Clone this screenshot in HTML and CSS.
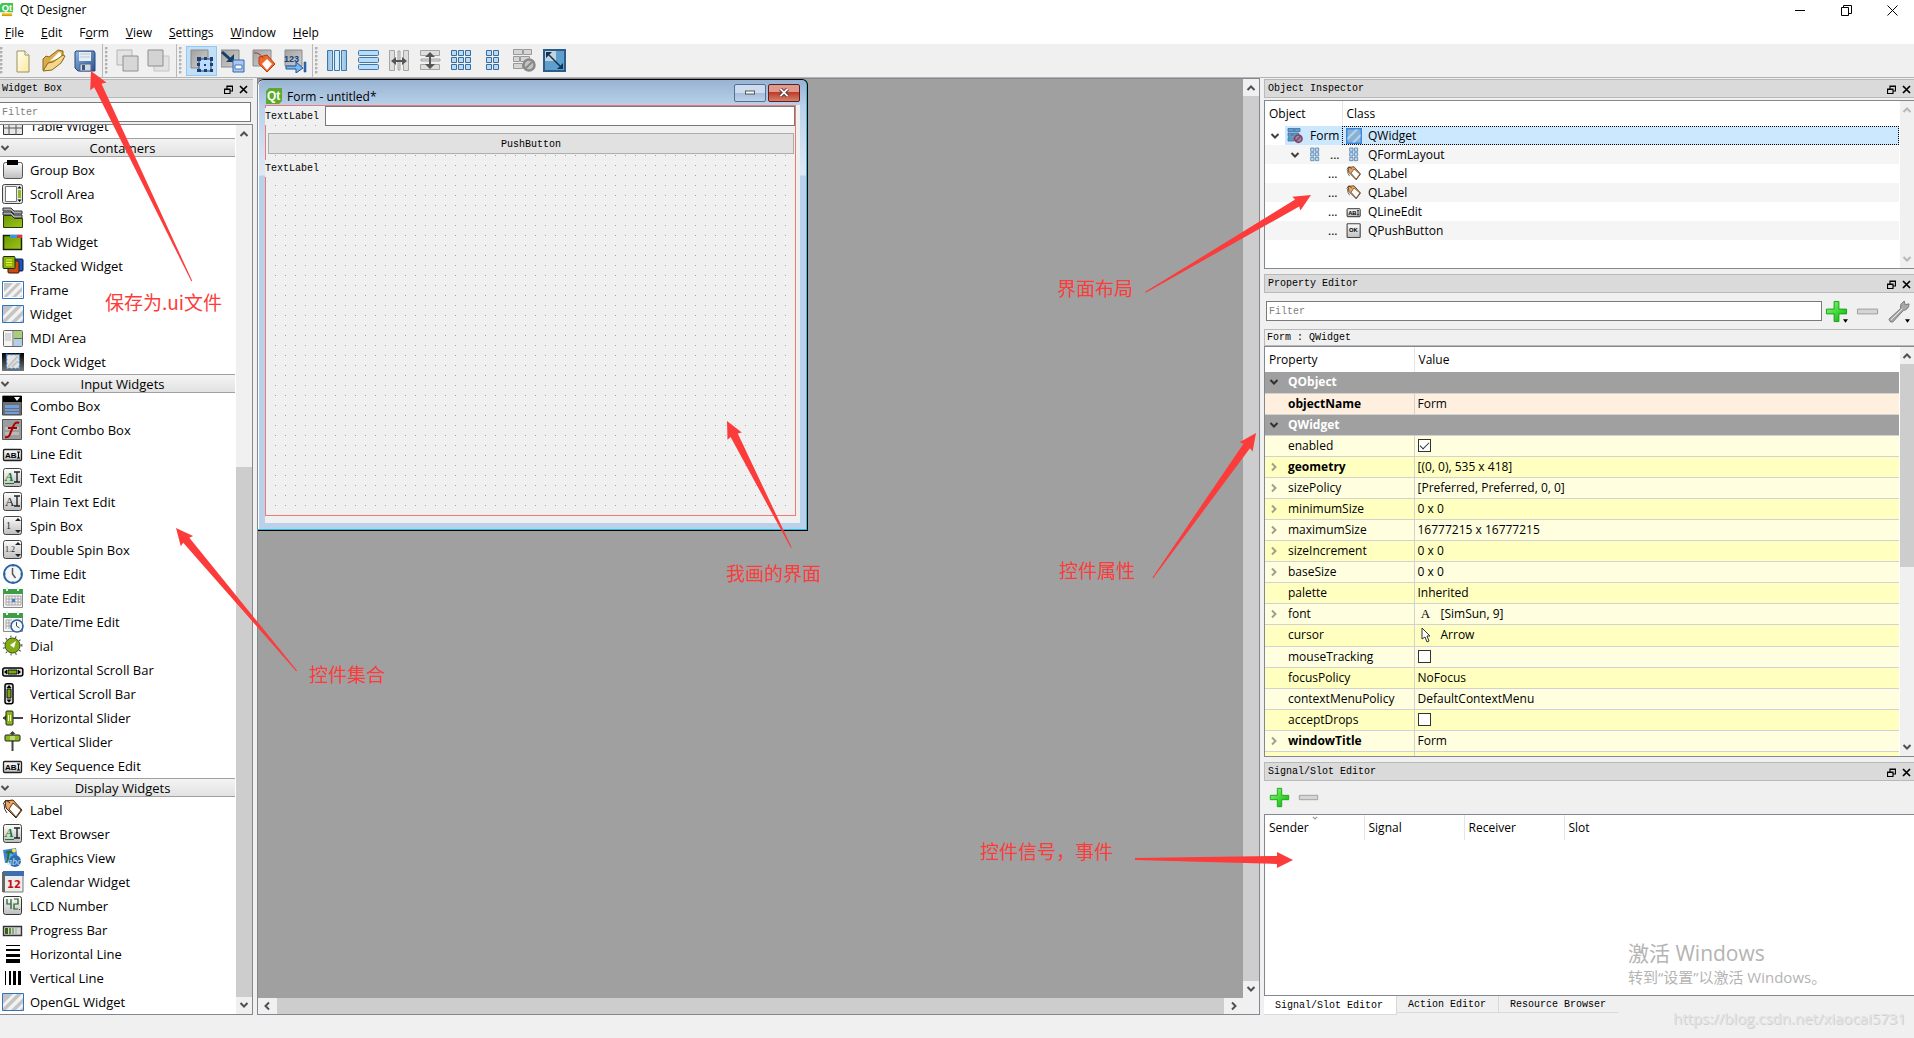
FILE: index.html
```html
<!DOCTYPE html>
<html lang="en">
<head>
<meta charset="utf-8">
<title>Qt Designer</title>
<link rel="stylesheet" href="styles.css">
</head>
<body>
<svg class="gradients" aria-hidden="true">
  <defs>
    <linearGradient id="g-grey" x1="0" y1="0" x2="0" y2="1"><stop offset="0" stop-color="#fdfdfd"/><stop offset="1" stop-color="#bdbdbd"/></linearGradient>
    <linearGradient id="g-dark" x1="0" y1="0" x2="1" y2="1"><stop offset="0" stop-color="#a2a2a2"/><stop offset="1" stop-color="#cfcfcf"/></linearGradient>
    <linearGradient id="g-green" x1="0" y1="0" x2="1" y2="1"><stop offset="0" stop-color="#6a9a00"/><stop offset="1" stop-color="#9ec41c"/></linearGradient>
    <linearGradient id="g-plus" x1="0" y1="0" x2="1" y2="1"><stop offset="0" stop-color="#8dfc7c"/><stop offset="1" stop-color="#00b400"/></linearGradient>
    <linearGradient id="g-blue" x1="0" y1="0" x2="1" y2="0"><stop offset="0" stop-color="#8fc0e8"/><stop offset=".5" stop-color="#d8f0ff"/><stop offset="1" stop-color="#8fc0e8"/></linearGradient>
    <linearGradient id="g-page" x1="0" y1="0" x2="1" y2="1"><stop offset="0" stop-color="#fffef0"/><stop offset="1" stop-color="#fbe9a0"/></linearGradient>
    <linearGradient id="g-disk" x1="0" y1="0" x2="1" y2="1"><stop offset="0" stop-color="#8fb6e4"/><stop offset="1" stop-color="#2a5392"/></linearGradient>
    <linearGradient id="g-black" x1="0" y1="0" x2="0" y2="1"><stop offset="0" stop-color="#000"/><stop offset="1" stop-color="#777"/></linearGradient>
  </defs>
</svg>
<svg class="sprite" aria-hidden="true">
  <symbol id="up" viewBox="0 0 10 10"><path d="M1.500 7L5 3.500 8.500 7" fill="none" stroke="currentColor" stroke-width="2"/></symbol>
  <symbol id="down" viewBox="0 0 10 10"><path d="M1.500 3L5 6.500 8.500 3" fill="none" stroke="currentColor" stroke-width="2"/></symbol>
  <symbol id="left" viewBox="0 0 10 10"><path d="M7 1.500L3.500 5 7 8.500" fill="none" stroke="currentColor" stroke-width="2"/></symbol>
  <symbol id="right" viewBox="0 0 10 10"><path d="M3 1.500L6.500 5 3 8.500" fill="none" stroke="currentColor" stroke-width="2"/></symbol>
  <symbol id="float" viewBox="0 0 9 9"><path d="M3 4V1h5.500v5H6M3 1.500h5.500M.5 4h5.500v4.500H.5zM.5 4.500H6" fill="none" stroke="#000" stroke-width="1.200"/></symbol>
  <symbol id="close" viewBox="0 0 9 9"><path d="M1 1l7 7M8 1L1 8" stroke="#000" stroke-width="1.700"/></symbol>
  <symbol id="app" viewBox="0 0 15 15"><path d="M2 0h12v10H0V2z" fill="#3fc455"/><text x="2" y="9" font-family="Liberation Sans" font-size="10" font-weight="bold" fill="#fff">Qt</text><path d="M2 11h11v2H2z" fill="#f5b800"/><path d="M2 13h11v1H2z" fill="#c98a00"/></symbol>
  <symbol id="qt" viewBox="0 0 16 16"><path d="M3 0h13v13l-3 3H0V3z" fill="#5caa2c"/><text x="1" y="12" font-family="Liberation Sans" font-size="12" font-weight="bold" fill="#fff">Qt</text></symbol>

  <symbol id="new" viewBox="0 0 24 24"><path d="M6 2h8l4 4v17H6z" fill="url(#g-page)" stroke="#9b9165"/><path d="M14 2v4h4" fill="#fff" stroke="#9b9165"/></symbol>
  <symbol id="open" viewBox="0 0 24 24"><path d="M1 21V10l3-3 3 1 9-7 5 1v9l-8 7z" fill="#d9ac4c" stroke="#8d6717"/><path d="M8 12l9-9 2 1v5z" fill="#fff"/><path d="M1 22l5-8 5-1 10-7 2 1-4 7-9 7z" fill="#f3d78a" stroke="#8d6717"/></symbol>
  <symbol id="save" viewBox="0 0 24 24"><path d="M3 2h18l1 2v18H5l-3-3V3z" fill="url(#g-disk)" stroke="#25467e"/><path d="M6 3h12v9H6z" fill="#e6edf4"/><path d="M7 5h10M7 8h10" stroke="#bcc6d0"/><path d="M7 15h11v7H7z" fill="#d5d8dc" stroke="#51698f"/><path d="M9 16h3v5H9z" fill="#3a5485"/></symbol>
  <symbol id="lower" viewBox="0 0 24 24"><path d="M1 1h15v15H1z" fill="#e3e3e3" stroke="#b5b5b5"/><path d="M7 7h15v15H7z" fill="#d7d7d7" stroke="#8e8e8e"/></symbol>
  <symbol id="raise" viewBox="0 0 24 24"><path d="M7 7h15v15H7z" fill="#e3e3e3" stroke="#c4c4c4"/><path d="M1 1h15v16H1z" fill="#d3d3d3" stroke="#8e8e8e"/></symbol>
  <symbol id="ew" viewBox="0 0 24 24"><path d="M1 1h17v18H1z" fill="url(#g-dark)" stroke="#8a8a8a"/><path d="M9 10h12v12H9z" fill="#b9dcff" stroke="#1c4176"/><path d="M7 8h4v4H7zM14 8h3v3h-3zM20 8h3v4h-3zM7 14h3v3H7zM20 14h3v3h-3zM7 20h4v3H7zM14 20h3v3h-3zM20 20h3v3h-3zM14 15h2v2h-2z" fill="#1c3f70"/></symbol>
  <symbol id="es" viewBox="0 0 24 24"><path d="M0 1h18v17H0z" fill="url(#g-dark)" stroke="#8a8a8a"/><path d="M1 3l9 8" stroke="#173f66" stroke-width="3"/><path d="M13 5v8H5z" fill="#173f66"/><path d="M12 11h11v12H12z" fill="#a9c8f4" stroke="#3467ab"/><path d="M14 16h7v4h-7z" fill="#fff" stroke="#4678bb"/></symbol>
  <symbol id="eb" viewBox="0 0 24 24"><path d="M1 1h18v16H1z" fill="url(#g-dark)" stroke="#8a8a8a"/><path d="M7 8l8-2 8 9-8 8-8-8z" fill="#f0682e" stroke="#b73c0a"/><path d="M15 10l5 5-5 6-5-6z" fill="#fff"/><path d="M2 4q5-1 9 5" fill="none" stroke="#a33" stroke-width="1"/></symbol>
  <symbol id="et" viewBox="0 0 24 24"><path d="M2 1h17v16H2z" fill="url(#g-dark)" stroke="#8a8a8a"/><text x="1" y="13" font-family="Liberation Sans" font-weight="bold" font-size="9" fill="#16447f">123</text><path d="M3 17h10v-4l7 6-7 5v-4H3z" fill="#79b8ee" stroke="#205394"/><path d="M21 13h2v10h-2z" fill="#3571b9" stroke="#173f7b" stroke-width=".5"/></symbol>
  <symbol id="hlay" viewBox="0 0 24 24"><g fill="url(#g-blue)" stroke="#4475a5"><path d="M1.500 1.500h5v20h-5zM8.500 1.500h5v20h-5zM15.500 1.500h5v20h-5z"/></g></symbol>
  <symbol id="vlay" viewBox="0 0 24 24"><g fill="#b6ddf8" stroke="#4475a5"><rect x="1.500" y="1.500" width="20" height="5" rx="1"/><rect x="1.500" y="8.500" width="20" height="5" rx="1"/><rect x="1.500" y="15.500" width="20" height="5" rx="1"/></g></symbol>
  <symbol id="hsplit" viewBox="0 0 24 24"><path d="M1.500 1.500h5v20h-5zM15.500 1.500h5v20h-5zM10 2h2v19h-2z" fill="#dedede" stroke="#a4a4a4"/><path d="M3 12l5-4v3h6V8l5 4-5 4v-3H8v3z" fill="#555"/></symbol>
  <symbol id="vsplit" viewBox="0 0 24 24"><path d="M1.500 1.500h19v5h-19zM1.500 15.500h19v5h-19zM2 10h19v2H2z" fill="#dedede" stroke="#a4a4a4"/><path d="M11 3l5 5h-4v7h4l-5 5-5-5h4V8H6z" fill="#555"/></symbol>
  <symbol id="grid" viewBox="0 0 24 24"><g fill="#b9dcf6" stroke="#3c6c9d"><path d="M1.500 1.500h5v5h-5zM8.500 1.500h5v5h-5zM15.500 1.500h5v5h-5zM1.500 8.500h5v5h-5zM8.500 8.500h5v5h-5zM15.500 8.500h5v5h-5zM1.500 15.500h5v5h-5zM8.500 15.500h5v5h-5zM15.500 15.500h5v5h-5z"/></g></symbol>
  <symbol id="formlay" viewBox="0 0 24 24"><g fill="#b9dcf6" stroke="#3c6c9d"><path d="M5.500 1.500h5v5h-5zM12.500 1.500h5v5h-5zM5.500 8.500h5v5h-5zM12.500 8.500h5v5h-5zM5.500 15.500h5v5h-5zM12.500 15.500h5v5h-5z"/></g></symbol>
  <symbol id="break" viewBox="0 0 24 24"><path d="M1.500 .5h9v5h-9zM11.500 .5h8v5h-8zM1.500 7.500h6v5h-6zM8.500 7.500h9v5h-9zM1.500 14.500h9v5h-9z" fill="#d5d5d5" stroke="#9a9a9a"/><circle cx="17" cy="16" r="5.500" fill="#c4c4c4" stroke="#8a8a8a" stroke-width="2.500"/><path d="M13 20l8-8" stroke="#8a8a8a" stroke-width="2"/></symbol>
  <symbol id="breakc" viewBox="0 0 24 24"><path d="M1.500 .5h9v5h-9zM11.500 .5h8v5h-8zM1.500 7.500h6v5h-6zM8.500 7.500h9v5h-9zM1.500 14.500h9v5h-9z" fill="#5f9bd0" stroke="#2e648f"/><circle cx="17" cy="16" r="5.500" fill="#7d8fc0" stroke="#943f58" stroke-width="2.500"/><path d="M13 20l8-8" stroke="#943f58" stroke-width="2"/></symbol>
  <symbol id="adjust" viewBox="0 0 24 24"><path d="M1 1h21v21H1z" fill="#5e9fcd" stroke="#2b5d88" stroke-width="2"/><path d="M2 2h11v10H2z" fill="#c5d3dc"/><path d="M6 6l11 11" stroke="#0d3454" stroke-width="1.500"/><path d="M3 3h6l-6 6zM20 20h-6l6-6z" fill="#0d3454"/></symbol>

  <symbol id="table" viewBox="0 0 22 22"><path d="M1.500 1.500h19v18h-19z" fill="#e7e7e7" stroke="#333"/><path d="M1 7h20M1 13h20M7 1v19M14 1v19" stroke="#555"/></symbol>
  <symbol id="groupbox" viewBox="0 0 22 22"><rect x="1.500" y="3.500" width="19" height="16" rx="2" fill="url(#g-grey)" stroke="#555"/><path d="M5 1h11v5H5z" fill="#000"/></symbol>
  <symbol id="scrollarea" viewBox="0 0 22 22"><rect x=".5" y="1.500" width="20" height="19" rx="2" fill="#e6e6e6" stroke="#444"/><path d="M3.500 3.500h11v15h-11z" fill="#fff" stroke="#777"/><path d="M16 7h3v8h-3z" fill="#8fbb14"/><path d="M15.500 5.500L17.500 3l2 2.500zM15.500 16.500l2 2.500 2-2.500z" fill="#000"/></symbol>
  <symbol id="toolbox" viewBox="0 0 22 22"><path d="M1.500 8.500h8l3 3h8v9h-19z" fill="url(#g-green)" stroke="#26380a"/><path d="M1 1h8l3 3h8v3h-8L9 4H1zM1 5h8l3 3h8v3h-8L9 8H1z" fill="#aaa" stroke="#333"/></symbol>
  <symbol id="tab" viewBox="0 0 22 22"><path d="M1.500 4.500h18v14h-18z" fill="url(#g-green)" stroke="#182404" stroke-width="1.500"/><path d="M8 4h7v3H8z" fill="#3796e6"/><path d="M15 4h5v3h-5z" fill="#e33"/></symbol>
  <symbol id="stacked" viewBox="0 0 22 22"><rect x="10" y="4" width="11" height="12" rx="1" fill="#1556c8" stroke="#061d4b"/><rect x="6" y="6" width="11" height="12" rx="1" fill="#c94a12" stroke="#431303"/><rect x="1" y="1.500" width="12" height="12" rx="1" fill="#8ab30b" stroke="#1d2b04"/><path d="M4 5h6M4 7.500h6M4 10h6" stroke="#f5ff45"/></symbol>
  <symbol id="frame" viewBox="0 0 22 22"><path d="M.5 2.500h21v17H.5z" fill="#fff" stroke="#3173bd"/><path d="M2 4h18v14H2z" fill="#c4c4c4"/><path d="M2 13l9-9h4L2 17zM5 18L19 4h1v4L10 18zM14 18l6-6v4l-2 2z" fill="#f2f2f2"/></symbol>
  <symbol id="widget" viewBox="0 0 22 22"><path d="M.5 2.500h21v17H.5z" fill="#c4c4c4" stroke="#3173bd"/><path d="M1 13L11 3h4L1 17zM4 19L20 3h1v4L9 19zM14 19l7-7v4l-3 3z" fill="#f2f2f2"/></symbol>
  <symbol id="widgetb" viewBox="0 0 22 22"><path d="M1 1h20v20H1z" fill="#86b1d6" stroke="#3c86dc" stroke-width="2"/><path d="M2 13L13 2h4L2 17zM8 20L20 8v4l-8 8z" fill="#b8d4ea"/></symbol>
  <symbol id="mdi" viewBox="0 0 22 22"><rect x="1.500" y="3.500" width="19" height="16" rx="1" fill="#f4f4f4" stroke="#666"/><path d="M12 4h8v7h-8z" fill="#a8cf78"/><path d="M12 12h8v7h-8z" fill="#b3cfe6"/><path d="M11 4v15M12 11.500h8" stroke="#666"/><path d="M3 7h6M3 9h6M3 11h6M3 13h6" stroke="#bbb"/></symbol>
  <symbol id="dock" viewBox="0 0 22 22"><path d="M0 2h22v18H0z" fill="url(#g-black)"/><path d="M4.500 3.500h13v14h-13z" fill="#e5e5e5" stroke="#2f79c9" stroke-width="1.500" stroke-dasharray="2 2"/><path d="M6 16L16 5M10 16l6-6" stroke="#c4c4c4" stroke-width="2"/></symbol>
  <symbol id="combo" viewBox="0 0 22 22"><path d="M.5 1h19v19H.5z" fill="#6f6f6f" stroke="#444"/><path d="M1 1h19v6H1z" fill="#000"/><path d="M12 2h6l-3 4z" fill="#fff"/><path d="M3 10h14v3H3zM3 14h14v2H3zM3 17h14v2H3z" fill="#6e9fdc"/></symbol>
  <symbol id="fontcombo" viewBox="0 0 22 22"><path d="M.5 .5h19v20H.5z" fill="#9c9c9c" stroke="#555"/><path d="M3 8h14v3H3zM3 13h14v3H3z" fill="#b9b9b9"/><path d="M17 4q-4-2-6 4L8 15q-1 4-5 3M6 9h9" fill="none" stroke="#a00" stroke-width="2"/></symbol>
  <symbol id="lineedit" viewBox="0 0 22 22"><rect x="1.500" y="6.500" width="18" height="11" rx="1" fill="url(#g-grey)" stroke="#222" stroke-width="1.300"/><text x="3" y="15" font-family="Liberation Sans" font-weight="bold" font-size="8" fill="#000">AB</text><path d="M15 9h3M15 15h3M16.500 9v6" stroke="#000"/></symbol>
  <symbol id="textedit" viewBox="0 0 22 22"><rect x="1.500" y="1.500" width="18" height="18" rx="2" fill="url(#g-grey)" stroke="#444"/><text x="3" y="14" font-family="Liberation Serif" font-weight="bold" font-style="italic" font-size="13" fill="#1c7a2c">A</text><path d="M3 16.500h9" stroke="#1c7a2c"/><path d="M12 5h6M12 15h6M15 5v10" stroke="#222" stroke-width="1.400"/></symbol>
  <symbol id="plain" viewBox="0 0 22 22"><rect x="1.500" y="1.500" width="18" height="18" rx="2" fill="url(#g-grey)" stroke="#444"/><text x="3" y="15" font-family="Liberation Serif" font-size="13" fill="#222">A</text><path d="M12 5h6M12 15h6M15 5v10" stroke="#222" stroke-width="1.400"/></symbol>
  <symbol id="spin" viewBox="0 0 22 22"><rect x="1.500" y="1.500" width="18" height="18" rx="2" fill="url(#g-grey)" stroke="#444"/><text x="4" y="14" font-family="Liberation Serif" font-size="10" fill="#222">1</text><path d="M13 6l3-3 3 3zM13 15l3 3 3-3z" fill="#222"/></symbol>
  <symbol id="dspin" viewBox="0 0 22 22"><rect x="1.500" y="1.500" width="18" height="18" rx="2" fill="url(#g-grey)" stroke="#444"/><text x="3" y="13" font-family="Liberation Serif" font-size="8" fill="#222">1.2</text><path d="M13 6l3-3 3 3zM13 15l3 3 3-3z" fill="#222"/></symbol>
  <symbol id="time" viewBox="0 0 22 22"><circle cx="11" cy="11" r="9" fill="#f4f6f8" stroke="#2c62a5" stroke-width="2"/><path d="M10.500 5v6l3 4" fill="none" stroke="#555" stroke-width="1.500"/><path d="M11 3v1M11 18v1M3 11h1M18 11h1" stroke="#777"/></symbol>
  <symbol id="date" viewBox="0 0 22 22"><path d="M1.500 2.500h19v18h-19z" fill="#f3f3f3" stroke="#8b8b8b"/><path d="M1 2h20v5H1z" fill="#3e9d46"/><path d="M5 0v4M16 0v4" stroke="#e3f3e3" stroke-width="2"/><path d="M4 9h15M4 12h15M4 15h15M4 18h15M4 9v9M7 9v9M10 9v9M13 9v9M16 9v9M19 9v9" stroke="#a7a7a7"/><path d="M10 12h3v3h-3z" fill="#3b7fd6"/></symbol>
  <symbol id="datetime" viewBox="0 0 22 22"><path d="M1.500 2.500h19v18h-19z" fill="#f3f3f3" stroke="#8b8b8b"/><path d="M1 2h20v5H1z" fill="#3e9d46"/><path d="M5 0v4M16 0v4" stroke="#e3f3e3" stroke-width="2"/><path d="M4 9h6M4 12h6M4 15h6M4 9v9M7 9v9" stroke="#a7a7a7"/><circle cx="15" cy="15" r="6" fill="#f4f6f8" stroke="#2c62a5" stroke-width="1.600"/><path d="M14.500 11v4l3 2" fill="none" stroke="#444"/></symbol>
  <symbol id="dial" viewBox="0 0 22 22"><circle cx="10.500" cy="10.500" r="9" fill="none" stroke="#444" stroke-width="2" stroke-dasharray="1 4"/><circle cx="10.500" cy="10.500" r="7.500" fill="#83ab16" stroke="#39500a"/><path d="M14 6l-2 7-4-3z" fill="#fff"/></symbol>
  <symbol id="hscroll" viewBox="0 0 22 22"><rect x=".8" y="9" width="20" height="8" rx="2" fill="#ddd" stroke="#000" stroke-width="1.500"/><path d="M6 11h9v4H6z" fill="#7aa80d" stroke="#111"/><path d="M5 10.500v5L2 13zM16 10.500v5l3-2.500z" fill="#000"/></symbol>
  <symbol id="vscroll" viewBox="0 0 22 22"><rect x="3" y=".8" width="8" height="20" rx="2" fill="#ddd" stroke="#000" stroke-width="1.500"/><path d="M5 6h4v9H5z" fill="#7aa80d" stroke="#111"/><path d="M4.500 5h5L7 2zM4.500 16.500h5L7 19.500z" fill="#000"/></symbol>
  <symbol id="hslider" viewBox="0 0 22 22"><path d="M1 11h20" stroke="#444" stroke-width="2"/><path d="M1 11l3-3v6z" fill="#444"/><rect x="4" y="4" width="7" height="14" rx="1" fill="#8cb71a" stroke="#222"/><path d="M6.500 8v6M8.500 8v6" stroke="#f4ffc5"/></symbol>
  <symbol id="vslider" viewBox="0 0 22 22"><path d="M10.500 1v19" stroke="#444" stroke-width="2"/><path d="M10.500 0l3 3h-6z" fill="#444"/><rect x="3" y="4" width="15" height="6" rx="1" fill="#8cb71a" stroke="#222"/><path d="M8 6h5M8 8h5" stroke="#f4ffc5"/></symbol>
  <symbol id="label" viewBox="0 0 22 22"><path d="M3 2l8-1 9 10-6 8L4 9z" fill="#f2a35c" stroke="#3b2412"/><path d="M11 4l8 7-5 7-7-8z" fill="#fff" stroke="#5a3b21"/><path d="M1 5l3-4 4 3M2 5q0 6 3 9" fill="none" stroke="#333"/></symbol>
  <symbol id="graphics" viewBox="0 0 22 22"><path d="M1 3l13-2 2 12-13 3z" fill="#3a84e0"/><path d="M3 14l4-8 6 3 2 4z" fill="#57b5ec"/><path d="M7 5l-2 11M4 6q3-3 7 0" fill="none" stroke="#366b22" stroke-width="2"/><circle cx="12" cy="3.500" r="2" fill="#fbe64a"/><circle cx="13" cy="14" r="6" fill="#2e6eaf"/><text x="5" y="18" font-family="Liberation Serif" font-style="italic" font-size="10" fill="#c8e0f6">abc</text></symbol>
  <symbol id="calendar" viewBox="0 0 22 22"><path d="M1 1h20v20H1z" fill="#ececec" stroke="#777"/><path d="M1 0h21v5H1z" fill="#3b6fb0"/><path d="M0 1h3v20H0z" fill="#666"/><text x="5" y="17" font-family="DejaVu Sans" font-weight="bold" font-size="10" fill="#c81010">12</text></symbol>
  <symbol id="lcd" viewBox="0 0 22 22"><rect x="1.500" y="1.500" width="18" height="18" rx="2" fill="url(#g-grey)" stroke="#333"/><path d="M5 4v5h4M9 4v10M12 4h4v5h-4v5h4M17.500 14v1" fill="none" stroke="#1a5a1c" stroke-width="1.200"/></symbol>
  <symbol id="progress" viewBox="0 0 22 22"><path d="M1.500 7.500h18v9h-18z" fill="#d6d6d6" stroke="#333" stroke-width="1.400"/><path d="M3 9h3v6H3z" fill="#39601b"/><path d="M7 9h2v6H7z" fill="#5e8c36"/><path d="M10 9h2v6h-2z" fill="#8da97b"/><path d="M13 9h2v6h-2z" fill="#b6c2ae"/></symbol>
  <symbol id="hline" viewBox="0 0 22 22"><path d="M4 2h14v1H4zM4 6h14v2H4zM4 11h14v3H4zM4 16h14v4H4z"/></symbol>
  <symbol id="vline" viewBox="0 0 22 22"><path d="M3 4h1v14H3zM7 4h2v14H7zM11 4h3v14h-3zM16 4h3v14h-3z"/></symbol>
  <symbol id="okbtn" viewBox="0 0 22 22"><rect x="1.500" y="1" width="18" height="19" rx="1" fill="url(#g-grey)" stroke="#444" stroke-width="1.500"/><text x="4" y="12" font-family="Liberation Sans" font-weight="bold" font-size="8">OK</text></symbol>
  <symbol id="plus" viewBox="0 0 24 24"><path d="M9.500 1.500h5v8h8v5h-8v8h-5v-8h-8v-5h8z" fill="url(#g-plus)" stroke="#16a016"/></symbol>
  <symbol id="minus" viewBox="0 0 24 24"><path d="M1.500 9.500h21v5h-21z" fill="#d5d5d5" stroke="#9b9b9b"/></symbol>
  <symbol id="wrench" viewBox="0 0 24 24"><path d="M2 20L14 9q-1-5 4-8l1 4 4-1q0 6-6 7L6 23q-3 1-4-3z" fill="#a8a8a8" stroke="#777"/><path d="M4 21L16 9" stroke="#eee"/></symbol>
  <symbol id="cursor" viewBox="0 0 16 16"><path d="M4 1v11l3-2 2 5 2-1-2-5h3z" fill="#fff" stroke="#333"/></symbol>
  <symbol id="drop" viewBox="0 0 6 4"><path d="M0 0h6L3 4z"/></symbol>
</svg>

<div class="app">
  <header class="titlebar">
    <svg class="app-icon"><use href="#app"/></svg>
    <h1>Qt Designer</h1>
    <div class="window-buttons">
      <button aria-label="Minimize"><svg viewBox="0 0 11 11"><path d="M0 5.500h10" stroke="#000"/></svg></button>
      <button aria-label="Restore"><svg viewBox="0 0 11 11"><path d="M.5 2.500h7v8h-7zM2.500 2.500v-2h8v8h-3" fill="none" stroke="#000"/></svg></button>
      <button aria-label="Close"><svg viewBox="0 0 11 11"><path d="M.5 .5l10 10M10.500 .5l-10 10" stroke="#000"/></svg></button>
    </div>
  </header>
  <nav class="menubar">
    <a href="#"><u>F</u>ile</a><a href="#"><u>E</u>dit</a><a href="#">F<u>o</u>rm</a><a href="#"><u>V</u>iew</a><a href="#"><u>S</u>ettings</a><a href="#"><u>W</u>indow</a><a href="#"><u>H</u>elp</a>
  </nav>
  <div class="toolbar">
    <div class="tool-group">
      <i class="handle"></i>
      <button aria-label="New"><svg><use href="#new"/></svg></button>
      <button aria-label="Open"><svg><use href="#open"/></svg></button>
      <button aria-label="Save"><svg><use href="#save"/></svg></button>
    </div>
    <div class="tool-group">
      <i class="handle"></i>
      <button aria-label="Send to back"><svg><use href="#lower"/></svg></button>
      <button aria-label="Bring to front"><svg><use href="#raise"/></svg></button>
    </div>
    <div class="tool-group">
      <i class="handle"></i>
      <button class="checked" aria-label="Edit widgets"><svg><use href="#ew"/></svg></button>
      <button aria-label="Edit signals/slots"><svg><use href="#es"/></svg></button>
      <button aria-label="Edit buddies"><svg><use href="#eb"/></svg></button>
      <button aria-label="Edit tab order"><svg><use href="#et"/></svg></button>
    </div>
    <div class="tool-group">
      <i class="handle"></i>
      <button aria-label="Lay out horizontally"><svg><use href="#hlay"/></svg></button>
      <button aria-label="Lay out vertically"><svg><use href="#vlay"/></svg></button>
      <button aria-label="Horizontal splitter"><svg><use href="#hsplit"/></svg></button>
      <button aria-label="Vertical splitter"><svg><use href="#vsplit"/></svg></button>
      <button aria-label="Lay out in a grid"><svg><use href="#grid"/></svg></button>
      <button aria-label="Lay out in a form"><svg><use href="#formlay"/></svg></button>
      <button aria-label="Break layout"><svg><use href="#break"/></svg></button>
      <button aria-label="Adjust size"><svg><use href="#adjust"/></svg></button>
    </div>
  </div>

  <main class="workspace">
    <section class="dock widget-box">
      <header class="dock-title"><h2>Widget Box</h2><button aria-label="Float"><svg><use href="#float"/></svg></button><button aria-label="Close"><svg><use href="#close"/></svg></button></header>
      <input class="filter" type="text" placeholder="Filter" aria-label="Filter widgets">
      <div class="widget-list">
        <div class="widget-scroll">
          <ul>
            <li><svg><use href="#table"/></svg>Table Widget</li>
          </ul>
          <button class="category"><svg><use href="#down"/></svg><span>Containers</span></button>
          <ul>
            <li><svg><use href="#groupbox"/></svg>Group Box</li>
            <li><svg><use href="#scrollarea"/></svg>Scroll Area</li>
            <li><svg><use href="#toolbox"/></svg>Tool Box</li>
            <li><svg><use href="#tab"/></svg>Tab Widget</li>
            <li><svg><use href="#stacked"/></svg>Stacked Widget</li>
            <li><svg><use href="#frame"/></svg>Frame</li>
            <li><svg><use href="#widget"/></svg>Widget</li>
            <li><svg><use href="#mdi"/></svg>MDI Area</li>
            <li><svg><use href="#dock"/></svg>Dock Widget</li>
          </ul>
          <button class="category"><svg><use href="#down"/></svg><span>Input Widgets</span></button>
          <ul>
            <li><svg><use href="#combo"/></svg>Combo Box</li>
            <li><svg><use href="#fontcombo"/></svg>Font Combo Box</li>
            <li><svg><use href="#lineedit"/></svg>Line Edit</li>
            <li><svg><use href="#textedit"/></svg>Text Edit</li>
            <li><svg><use href="#plain"/></svg>Plain Text Edit</li>
            <li><svg><use href="#spin"/></svg>Spin Box</li>
            <li><svg><use href="#dspin"/></svg>Double Spin Box</li>
            <li><svg><use href="#time"/></svg>Time Edit</li>
            <li><svg><use href="#date"/></svg>Date Edit</li>
            <li><svg><use href="#datetime"/></svg>Date/Time Edit</li>
            <li><svg><use href="#dial"/></svg>Dial</li>
            <li><svg><use href="#hscroll"/></svg>Horizontal Scroll Bar</li>
            <li><svg><use href="#vscroll"/></svg>Vertical Scroll Bar</li>
            <li><svg><use href="#hslider"/></svg>Horizontal Slider</li>
            <li><svg><use href="#vslider"/></svg>Vertical Slider</li>
            <li><svg><use href="#lineedit"/></svg>Key Sequence Edit</li>
          </ul>
          <button class="category"><svg><use href="#down"/></svg><span>Display Widgets</span></button>
          <ul>
            <li><svg><use href="#label"/></svg>Label</li>
            <li><svg><use href="#textedit"/></svg>Text Browser</li>
            <li><svg><use href="#graphics"/></svg>Graphics View</li>
            <li><svg><use href="#calendar"/></svg>Calendar Widget</li>
            <li><svg><use href="#lcd"/></svg>LCD Number</li>
            <li><svg><use href="#progress"/></svg>Progress Bar</li>
            <li><svg><use href="#hline"/></svg>Horizontal Line</li>
            <li><svg><use href="#vline"/></svg>Vertical Line</li>
            <li><svg><use href="#widget"/></svg>OpenGL Widget</li>
          </ul>
        </div>
        <div class="vbar"><svg><use href="#up"/></svg><div class="track end"><div class="thumb" style="height:62%"></div></div><svg><use href="#down"/></svg></div>
      </div>
    </section>

    <section class="mdi">
      <div class="canvas">
        <article class="form-window">
          <header class="form-title">
            <svg class="qt-icon"><use href="#qt"/></svg>
            <h2>Form - untitled*</h2>
            <button class="aero" aria-label="Minimize"><svg viewBox="0 0 12 6"><rect x="1.500" y="1.500" width="9" height="3" fill="#fff" stroke="#555"/></svg></button>
            <button class="aero aero-close" aria-label="Close"><svg viewBox="0 0 12 10"><path d="M2 1l8 8M10 1L2 9" stroke="#533" stroke-width="4"/><path d="M2 1l8 8M10 1L2 9" stroke="#fff" stroke-width="2"/></svg></button>
          </header>
          <div class="form-body">
            <div class="form-layout">
              <div class="form-row"><label for="line-edit">TextLabel</label><input id="line-edit" type="text"></div>
              <div class="button-row"><button>PushButton</button></div>
              <div class="form-row"><span class="form-label">TextLabel</span></div>
            </div>
          </div>
        </article>
      </div>
      <div class="vbar"><svg><use href="#up"/></svg><div class="track"><div class="thumb full"></div></div><svg><use href="#down"/></svg></div>
      <div class="hbar"><svg><use href="#left"/></svg><div class="track"><div class="thumb full"></div></div><svg><use href="#right"/></svg></div>
    </section>

    <div class="side">
      <section class="dock inspector">
        <header class="dock-title"><h2>Object Inspector</h2><button aria-label="Float"><svg><use href="#float"/></svg></button><button aria-label="Close"><svg><use href="#close"/></svg></button></header>
        <div class="view">
          <div class="view-body">
            <table class="objects">
              <thead><tr><th>Object</th><th>Class</th></tr></thead>
              <tbody>
                <tr class="selected"><td><div class="node"><svg class="twist"><use href="#down"/></svg><span class="node-name"><svg><use href="#breakc"/></svg>Form</span></div></td><td><div class="cls"><svg><use href="#widgetb"/></svg>QWidget</div></td></tr>
                <tr><td><div class="node level2"><svg class="twist"><use href="#down"/></svg><svg><use href="#formlay"/></svg><span>...</span></div></td><td><div class="cls"><svg><use href="#formlay"/></svg>QFormLayout</div></td></tr>
                <tr><td><div class="node leaf">...</div></td><td><div class="cls"><svg><use href="#label"/></svg>QLabel</div></td></tr>
                <tr><td><div class="node leaf">...</div></td><td><div class="cls"><svg><use href="#label"/></svg>QLabel</div></td></tr>
                <tr><td><div class="node leaf">...</div></td><td><div class="cls"><svg><use href="#lineedit"/></svg>QLineEdit</div></td></tr>
                <tr><td><div class="node leaf">...</div></td><td><div class="cls"><svg><use href="#okbtn"/></svg>QPushButton</div></td></tr>
              </tbody>
            </table>
          </div>
          <div class="vbar disabled"><svg><use href="#up"/></svg><div class="track"></div><svg><use href="#down"/></svg></div>
        </div>
      </section>

      <section class="dock properties">
        <header class="dock-title"><h2>Property Editor</h2><button aria-label="Float"><svg><use href="#float"/></svg></button><button aria-label="Close"><svg><use href="#close"/></svg></button></header>
        <div class="prop-tools">
          <input class="filter" type="text" placeholder="Filter" aria-label="Filter properties">
          <button aria-label="Add dynamic property"><svg><use href="#plus"/></svg><svg class="drop"><use href="#drop"/></svg></button>
          <button aria-label="Remove dynamic property"><svg><use href="#minus"/></svg></button>
          <button aria-label="Configure"><svg><use href="#wrench"/></svg><svg class="drop"><use href="#drop"/></svg></button>
        </div>
        <p class="prop-target">Form : QWidget</p>
        <div class="view">
          <div class="view-body">
            <table class="props">
              <thead><tr><th>Property</th><th>Value</th></tr></thead>
              <tbody>
                <tr class="group"><th colspan="2"><svg><use href="#down"/></svg>QObject</th></tr>
                <tr class="object bold"><td>objectName</td><td>Form</td></tr>
                <tr class="group"><th colspan="2"><svg><use href="#down"/></svg>QWidget</th></tr>
                <tr><td><label for="p-enabled">enabled</label></td><td><input id="p-enabled" type="checkbox" checked></td></tr>
                <tr class="bold"><td><svg><use href="#right"/></svg>geometry</td><td>[(0, 0), 535 x 418]</td></tr>
                <tr><td><svg><use href="#right"/></svg>sizePolicy</td><td>[Preferred, Preferred, 0, 0]</td></tr>
                <tr><td><svg><use href="#right"/></svg>minimumSize</td><td>0 x 0</td></tr>
                <tr><td><svg><use href="#right"/></svg>maximumSize</td><td>16777215 x 16777215</td></tr>
                <tr><td><svg><use href="#right"/></svg>sizeIncrement</td><td>0 x 0</td></tr>
                <tr><td><svg><use href="#right"/></svg>baseSize</td><td>0 x 0</td></tr>
                <tr><td>palette</td><td>Inherited</td></tr>
                <tr><td><svg><use href="#right"/></svg>font</td><td><span class="with-icon"><b>A</b>[SimSun, 9]</span></td></tr>
                <tr class="tall"><td>cursor</td><td><span class="with-icon"><svg><use href="#cursor"/></svg>Arrow</span></td></tr>
                <tr><td><label for="p-mouse">mouseTracking</label></td><td><input id="p-mouse" type="checkbox"></td></tr>
                <tr><td>focusPolicy</td><td>NoFocus</td></tr>
                <tr><td>contextMenuPolicy</td><td>DefaultContextMenu</td></tr>
                <tr><td><label for="p-drops">acceptDrops</label></td><td><input id="p-drops" type="checkbox"></td></tr>
                <tr class="bold"><td><svg><use href="#right"/></svg>windowTitle</td><td>Form</td></tr>
                <tr><td></td><td></td></tr>
              </tbody>
            </table>
          </div>
          <div class="vbar"><svg><use href="#up"/></svg><div class="track"><div class="thumb" style="height:54%"></div></div><svg><use href="#down"/></svg></div>
        </div>
      </section>

      <section class="dock signals">
        <header class="dock-title"><h2>Signal/Slot Editor</h2><button aria-label="Float"><svg><use href="#float"/></svg></button><button aria-label="Close"><svg><use href="#close"/></svg></button></header>
        <div class="signal-tools">
          <button aria-label="Add connection"><svg><use href="#plus"/></svg></button>
          <button aria-label="Remove connection"><svg><use href="#minus"/></svg></button>
        </div>
        <div class="view">
          <table class="connections">
            <thead><tr><th>Sender<svg class="sort"><use href="#down"/></svg></th><th>Signal</th><th>Receiver</th><th>Slot</th></tr></thead>
          </table>
        </div>
        <div class="tabs">
          <button class="active">Signal/Slot Editor</button><button>Action Editor</button><button>Resource Browser</button>
        </div>
      </section>
    </div>
  </main>
  <footer class="statusbar"></footer>

  <div class="activate"><p>激活 Windows</p><p>转到“设置”以激活 Windows。</p></div>
  <div class="source">https://blog.csdn.net/xiaocai5731</div>

  <div class="notes">
    <svg class="arrows" fill="#fc3b3b">
      <path transform="translate(91 71) rotate(-115.500)" d="M0 0l-17 9 1-5-217-3v-1l217-4-1-5z"/>
      <path transform="translate(176 528) rotate(-130)" d="M0 0l-17 8 1-4-171-3v-1l171-4-1-4z"/>
      <path transform="translate(727 421) rotate(-116.700)" d="M0 0l-17 8 1-4-126-3v-1l126-4-1-4z"/>
      <path transform="translate(1311 195) rotate(-30.300)" d="M0 0l-17 8 1-4-176-3v-1l176-4-1-4z"/>
      <path transform="translate(1256 433) rotate(-54.400)" d="M0 0l-17 8 1-4-162-3v-1l162-4-1-4z"/>
      <path transform="translate(1293 860) rotate(.4)" d="M0 0l-16 8v-4l-142-3v-2l142-3v-4z"/>
    </svg>
    <span class="note n-save">保存为.ui文件</span>
    <span class="note n-widgets">控件集合</span>
    <span class="note n-form">我画的界面</span>
    <span class="note n-layout">界面布局</span>
    <span class="note n-props">控件属性</span>
    <span class="note n-signals">控件信号，事件</span>
  </div>
</div>
</body>
</html>
```
FILE: styles.css
```css
* { box-sizing: border-box; }

body {
  margin: 0;
  background: #f0f0f0;
  color: #000;
  font: 12px/16px "Open Sans", "Noto Sans", "Noto Sans CJK SC", sans-serif;
}

h1, h2, p, ul { margin: 0; padding: 0; font-size: inherit; font-weight: normal; }
ul { list-style: none; }
button, input { font: inherit; color: inherit; border: 0; padding: 0; margin: 0; background: none; border-radius: 0; }
svg { display: block; flex: none; }
table { border-collapse: collapse; border-spacing: 0; }
th { font-weight: normal; text-align: left; }
.gradients { position: absolute; width: 0; height: 0; }
.sprite { display: none; }

.app { position: relative; display: flex; flex-direction: column; height: 100vh; overflow: hidden; }

/* Title bar and menus */
.titlebar { display: flex; align-items: center; gap: 6px; height: 20px; background: #fff; }
.app-icon { width: 14px; height: 14px; }
.window-buttons { display: flex; gap: 34px; margin-left: auto; margin-right: 15px; }
.window-buttons button { width: 12px; height: 12px; }
.window-buttons svg { width: 11px; height: 11px; }
.menubar { display: flex; gap: 17px; height: 24px; padding: 5px 5px 0; background: #fff; }
.menubar a { color: inherit; text-decoration: none; }

/* Toolbar */
.toolbar { display: flex; height: 34px; border-bottom: 1px solid #b4b4b4; }
.tool-group { display: flex; align-items: center; padding: 0 2px; border-right: 1px solid #b9b9b9; }
.tool-group:first-child { padding-left: 0; }
.tool-group:last-child { border-right: 0; }
.handle { width: 3px; height: 28px; margin-right: 4px; background: radial-gradient(circle at 1px 1px, #b0b0b0 1px, transparent 2px) 0 0 / 3px 4px; }
.tool-group button { display: flex; align-items: center; justify-content: center; width: 31px; height: 30px; }
.tool-group button svg { width: 24px; height: 24px; }
.tool-group .checked { background: #c2dff5; border: 1px solid #90c8f6; }

/* Docks */
.workspace { display: flex; flex: 1; min-height: 0; }
.dock { display: flex; flex-direction: column; min-height: 0; }
.dock-title {
  display: flex; align-items: center; height: 19px; padding: 1px 0 0 3px;
  background: #dadada; border: 1px solid #b9b9b9; border-right-width: 0;
}
.dock-title h2 { flex: 1; }
.dock-title button { width: 15px; height: 15px; padding: 3px; }
.dock-title svg { width: 9px; height: 9px; }
.dock-title, .filter, .prop-target, .tabs, .form-body { font-family: "Liberation Mono", monospace; font-size: 10px; }
.filter { height: 20px; padding: 1px 2px 0; background: #fff; border: 1px solid #7a7a7a; }
.filter::placeholder { color: #808080; opacity: 1; }

.vbar, .hbar { display: flex; align-items: center; background: #f0f0f0; color: #505050; }
.vbar { flex-direction: column; flex: none; width: 16px; padding: 4px 0; gap: 3px; }
.vbar svg, .hbar svg { width: 10px; height: 10px; }
.track { flex: 1; min-height: 0; display: flex; flex-direction: column; align-self: stretch; }
.track.end { justify-content: flex-end; }
.thumb { background: #cdcdcd; }
.thumb.full { flex: 1; }
.disabled { color: #b8b8b8; }

/* Widget box */
.widget-box { flex: none; width: 253px; padding-top: 1px; }
.widget-box .dock-title { border-left: 0; padding: 1px 2px 0; }
.widget-box .filter { margin: 4px 2px 2px 0; border-left: 0; }
.widget-list { display: flex; flex: 1; min-height: 0; background: #fff; border: 1px solid #828790; border-left: 0; }
.widget-scroll { display: flex; flex: 1; flex-direction: column; justify-content: flex-end; margin-right: 1px; overflow: hidden; font-size: 13px; }
.widget-scroll li { display: flex; align-items: center; gap: 6px; height: 24px; padding-left: 2px; }
.widget-scroll li svg { width: 22px; height: 22px; }
.category {
  display: flex; align-items: center; flex: none; height: 19px; margin-bottom: 1px;
  background: linear-gradient(#f4f4f4, #e2e2e2); border: solid #a0a0a0; border-width: 1px 0;
}
.category svg { width: 10px; height: 10px; color: #505050; }
.category span { flex: 1; }

/* Form area */
.mdi {
  display: grid; grid-template: minmax(0, 1fr) 16px / minmax(0, 1fr) 16px; flex: 1;
  margin: 0 4px; border: 1px solid #828790; background: #f0f0f0;
}
.canvas { position: relative; background: #a0a0a0; overflow: hidden; }
.hbar { padding: 0 4px; gap: 5px; }
.form-window {
  position: absolute; left: 0; top: 0; padding: 0 7px 7px;
  border: solid #000; border-width: 1px 1px 1px 0; border-radius: 6px 6px 0 0;
  background: linear-gradient(#98b3d2, #b9d1ea 26px, #dfe9f7 95px, #b9d1ea 96px);
  box-shadow: inset -1px -1px #31bfdc, inset 1px 0 #fff;
}
.form-title { display: flex; align-items: center; gap: 2px; height: 25px; }
.form-title h2 { flex: 1; padding: 8px 0 0 3px; }
.qt-icon { width: 16px; height: 16px; margin: 7px 0 0 1px; }
.aero { display: flex; align-items: center; justify-content: center; width: 32px; height: 18px; border: 1px solid #56708f; border-radius: 2px; background: linear-gradient(#cddcee 50%, #a5bdd9 50%, #bdd3ea); }
.aero svg { width: 12px; height: 9px; }
.aero-close { border-color: #5c1f25; background: linear-gradient(#dd9a8d 45%, #bd3a24 45%, #d4806c); }
.form-body { width: 535px; height: 418px; background: #f0f0f0; }
.form-layout {
  display: flex; flex-direction: column; width: 531px; height: 411px; border: 1px solid #f27878; border-left-width: 0;
  background: conic-gradient(from 270deg at 1px 1px, #a0a0a0 25%, transparent 0) 0 -1px / 10px 10px;
  box-shadow: inset 1px 0 #f27878;
}
.form-row { display: flex; align-items: center; height: 20px; }
.form-row label, .form-label { width: 54px; padding-top: 1px; background: #f0f0f0; }
.form-row label { margin-right: 6px; }
.form-row input { flex: 1; height: 20px; background: #fff; border: 1px solid #7a7a7a; }
.button-row { padding: 7px 1px 1px 2px; margin: 0 0 3px 1px; background: #f0f0f0; }
.button-row button { display: block; width: 100%; height: 21px; padding-top: 2px; background: #e1e1e1; border: 1px solid #adadad; }

/* Right-hand docks */
.side { display: flex; flex-direction: column; flex: none; width: 650px; gap: 5px; padding-top: 1px; }
.inspector { flex: 190 1 0; }
.properties { flex: 483 1 0; }
.signals { flex: 253 1 0; }
.view { display: flex; flex: 1; min-height: 0; background: #fff; border: 1px solid #828790; border-right: 0; }
.view-body { flex: 1; min-width: 0; overflow: hidden; }
.view .vbar { width: 14px; margin-left: 1px; }
.inspector .view { margin-top: 2px; }
.view table { width: 100%; table-layout: fixed; }
.view td, .view th { padding: 0; }
.view thead th { height: 25px; padding-left: 4px; border-right: 1px solid #e5e5e5; }
.view thead th:last-child { border-right: 0; }

.objects th:first-child { width: 77px; }
.objects tbody tr { height: 19px; }
.objects tbody tr:nth-child(even) { background: #f5f5f5; }
.objects svg { width: 16px; height: 16px; }
.objects .twist, .objects .twist use { width: 10px; height: 10px; color: #404040; }
.node { display: flex; align-items: center; height: 19px; padding-left: 5px; gap: 5px; }
.node-name { display: flex; align-items: center; flex: 1; gap: 7px; height: 19px; padding-left: 2px; background: #cce8ff; }
.level2 { padding-left: 25px; gap: 7px; }
.leaf { padding-left: 63px; }
.cls { display: flex; align-items: center; height: 19px; gap: 6px; padding-left: 4px; }
.selected td:last-child { background: #cce8ff; }
.selected .cls { height: 19px; padding-left: 3px; border: 1px dotted #000; }

.prop-tools { display: flex; align-items: center; height: 36px; padding-left: 2px; }
.prop-tools .filter { flex: 1; margin-right: 3px; }
.prop-tools button, .signal-tools button { position: relative; width: 23px; height: 24px; margin-right: 8px; }
.prop-tools button:last-child { margin-right: 4px; }
.prop-tools svg { width: 23px; height: 23px; }
.prop-tools .drop { position: absolute; right: 0; bottom: 0; width: 5px; height: 4px; }
.prop-target { height: 17px; padding-left: 2px; line-height: 16px; border: solid #b9b9b9; border-width: 1px 0 1px 1px; }

.props tbody tr { height: 21px; background: #ffffbf; }
.props tbody tr:nth-child(even) { background: #ffffdf; }
.props tbody tr.object { background: #ffefdf; }
.props tbody tr.tall { height: 22px; }
.props thead th:first-child { width: 149px; }
.props tbody td { position: relative; padding-left: 3px; border-bottom: 1px solid #d2d2d2; }
.props tbody td:first-child { padding-left: 23px; border-right: 1px solid #d2d2d2; }
.props tbody tr.group { background: #a0a0a0; color: #fff; font-weight: bold; }
.props tbody .group th { position: relative; padding-left: 23px; font-weight: bold; border-bottom: 1px solid #d2d2d2; }
.props td > svg, .props th > svg { position: absolute; left: 4px; top: 5px; width: 10px; height: 10px; color: #a0a088; }
.props th > svg { color: #303030; }
.props .bold td:first-child { font-weight: bold; }
.props input { display: block; appearance: none; width: 13px; height: 13px; background: #fff; border: 1px solid #333; }
.props input:checked::after {
  content: ""; display: block; width: 8px; height: 4px; margin: 2px 0 0 1px;
  border: solid #333; border-width: 0 0 1px 1px; transform: rotate(-45deg);
}
.with-icon { display: flex; align-items: center; gap: 7px; }
.with-icon svg { width: 16px; height: 16px; }
.with-icon b { width: 16px; text-align: center; font: 13px/16px "Liberation Serif", serif; }

.signal-tools { display: flex; align-items: center; height: 33px; padding-left: 5px; }
.signal-tools button { margin-right: 6px; }
.signal-tools svg { width: 21px; height: 21px; }
.signals .view { flex: 1; align-items: flex-start; }
.signals .view table { width: auto; }
.connections th { position: relative; width: 100px; }
.connections th:first-child { width: 99px; }
.connections .sort { position: absolute; left: 46px; top: 0; width: 8px; height: 6px; color: #999; }

.tabs { display: flex; align-items: flex-start; height: 19px; }
.tabs button { height: 17px; padding: 1px 12px 0 11px; border: solid #d9d9d9; border-width: 0 1px 1px 0; }
.tabs .active { height: 19px; padding: 1px 13px 0 11px; background: #fff; }
.tabs button:last-child { border-right: 0; }
.statusbar { flex: none; height: 23px; }

/* Overlays */
.activate { position: absolute; right: 92px; bottom: 49px; width: 194px; color: #b4b4b4; font-family: "Open Sans", "Noto Sans CJK SC", sans-serif; line-height: 24px; white-space: nowrap; }
.activate p:first-child { font-size: 21px; }
.activate p:last-child { font-size: 15px; }
.source { position: absolute; right: 8px; bottom: 9px; color: #e2e2e2; font: 15px/22px "Open Sans", sans-serif; text-shadow: 1px 1px #d0d0d0; }
.notes { position: absolute; inset: 0; pointer-events: none; }
.arrows { width: 100%; height: 100%; }
.note { position: absolute; color: #fc3b3b; font: 19px/24px "Noto Sans CJK SC", sans-serif; white-space: nowrap; }
.n-save { left: 105px; top: 290px; }
.n-widgets { left: 309px; top: 662px; }
.n-form { left: 726px; top: 561px; }
.n-layout { left: 1057px; top: 276px; }
.n-props { left: 1059px; top: 558px; }
.n-signals { left: 980px; top: 839px; }
```
